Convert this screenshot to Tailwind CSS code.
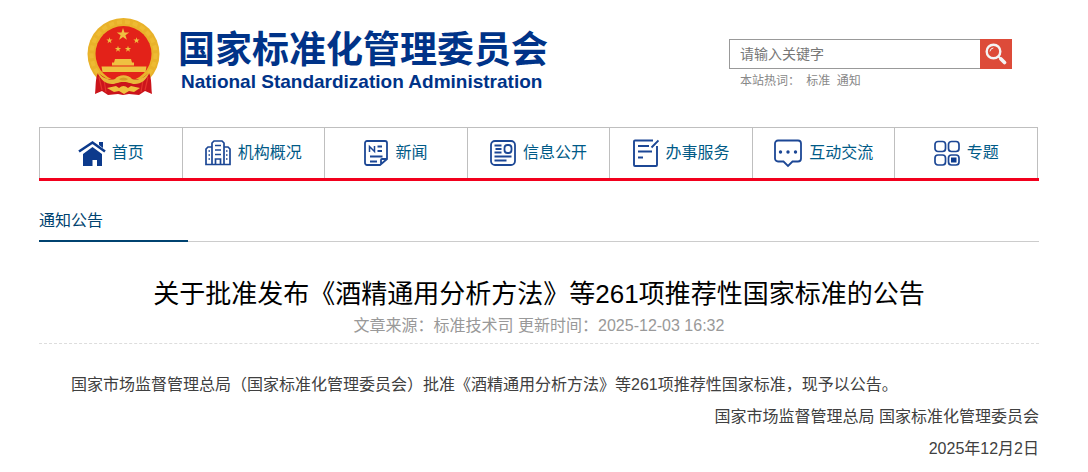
<!DOCTYPE html>
<html lang="zh-CN">
<head>
    <meta charset="UTF-8">
    <meta name="viewport" content="width=device-width, initial-scale=1.0">
    <title>国家标准化管理委员会</title>
    <script src="https://cdn.jsdelivr.net/npm/@tailwindcss/browser@4"></script>
    <style>
        body {
            font-family: 'Liberation Sans', 'Noto Sans CJK SC', sans-serif;
        }
    </style>
</head>
<body class="bg-white pr-[10px]">
    <div class="max-w-[1000px] mx-auto">
        <!-- Header -->
        <header class="flex justify-between pt-[17px] pl-12 pr-[27px] h-[127px]">
            <a href="#" class="flex items-start text-[#003388]">
                <svg class="w-[74px] h-[79px] shrink-0" viewBox="0 0 74 79">
                    <circle cx="36.500" cy="37" r="36" fill="#e9b22a"/>
                    <circle cx="36.500" cy="37" r="32" fill="none" stroke="#eebb33" stroke-width="4" stroke-dasharray="5 3"/>
                    <circle cx="36.500" cy="37" r="28" fill="#e32219"/>
                    <path d="M11 56C8 62 9 70 8 77l7-3 6 4 10-1 5 1 6-1 10 1 6-4 7 3c-1-7 0-15-3-21l-8 6-10 0-7 3-7-3-10 0z" fill="#cb141b"/>
                    <path d="M12 60l3 13M17 63l2 12M61 60l-3 13M56 63l-2 12" stroke="#e5332b" stroke-width="1.200"/>
                    <g fill="#efc141">
                        <path d="M0-6.500L1.500-2H6.200L2.400.8 3.900 5.300 0 2.500-3.900 5.300-2.400.8-6.200-2H-1.500z" transform="translate(36 17.500)"/>
                        <path d="M0-6.500L1.500-2H6.200L2.400.8 3.900 5.300 0 2.500-3.900 5.300-2.400.8-6.200-2H-1.500z" transform="translate(22.500 23.500) scale(.5)"/>
                        <path d="M0-6.500L1.500-2H6.200L2.400.8 3.900 5.300 0 2.500-3.900 5.300-2.400.8-6.200-2H-1.500z" transform="translate(49.500 23.500) scale(.5)"/>
                        <path d="M0-6.500L1.500-2H6.200L2.400.8 3.900 5.300 0 2.500-3.900 5.300-2.400.8-6.200-2H-1.500z" transform="translate(31 32) scale(.5)"/>
                        <path d="M0-6.500L1.500-2H6.200L2.400.8 3.900 5.300 0 2.500-3.900 5.300-2.400.8-6.200-2H-1.500z" transform="translate(41 32) scale(.5)"/>
                        <path d="M28 42h16l1 3.500H27zM25 45.500h22v3H25zM14.500 49.500h45l-1 5.500h-43z"/>
                    </g>
                    <path d="M10 54c5 7 12 10 18 8 4-5 13-5 17 0 6 2 13-1 18-8-3 9-9 13-15 13-4 0-6-2-11.500-2S29 67 25 67c-6 0-12-4-15-13z" fill="#e9b93a"/>
                    <path d="M20 71l9-2 3 2q4.500-4 9 0l3-2 9 2-6 4-5-1-5 3-5-3-5 1z" fill="#efc141"/>
                    <path d="M32 62c3-2 6-2 9 0-2 2-7 2-9 0z" fill="#d69a24"/>
                </svg>
                <span class="flex flex-col pt-[13px] pl-[17px]">
                    <span class="text-[37px] leading-[42px] font-bold whitespace-nowrap">国家标准化管理委员会</span>
                    <span class="text-[19px] leading-5 font-bold pl-[3px] whitespace-nowrap">National Standardization Administration</span>
                </span>
            </a>
            <div class="w-[283px] pt-[22px] text-[#888]">
                <form class="flex">
                    <input type="text" aria-label="关键字" placeholder="请输入关键字" class="flex-1 min-w-0 h-[30px] border border-r-0 border-[#999] px-[10px] text-sm placeholder:text-[#777] focus:outline-none">
                    <button type="submit" aria-label="搜索" class="w-8 h-[30px] bg-[#dd4b39] flex items-center justify-center">
                        <svg class="w-[22px] h-[22px]" viewBox="0 0 22 22" fill="none" stroke="#f4f4f4" stroke-linecap="round">
                            <circle cx="8.500" cy="8.500" r="6.800" stroke-width="2.400"/>
                            <path d="M5 8a3.500 3.500 0 0 1 3-3" stroke-width="1"/>
                            <path d="M14 14l2 2" stroke-width="2"/>
                            <path d="M16 16l3.500 3.500" stroke-width="3.600"/>
                        </svg>
                    </button>
                </form>
                <p class="pl-[11px] pt-[2px] text-xs leading-5">本站热词： <a href="#" class="mx-[3px]">标准</a> <a href="#">通知</a></p>
            </div>
        </header>

        <!-- Navigation -->
        <nav class="border-b-[3px] border-[#f2001d]">
            <ul class="mr-px grid grid-cols-7 border-t border-l border-[#bfbfbf] text-[#005a87]">
                <li class="border-r border-[#bfbfbf]">
                    <a href="#" class="flex h-[50px] items-center justify-center gap-[6px]">
                        <svg class="w-7 h-7" viewBox="0 0 28 28" fill="#0c3a8c">
                            <path d="M1 12.500L14.500 3.500 27 12.500" fill="none" stroke="#0c3a8c" stroke-width="2.600"/>
                            <path d="M21 3h4v6l-4-3zM14.500 8L24 15v12h-5v-6h-4.500v6H5V15z"/>
                        </svg>
                        首页
                    </a>
                </li>
                <li class="border-r border-[#bfbfbf]">
                    <a href="#" class="flex h-[50px] items-center justify-center gap-[7px]">
                        <svg class="w-[26px] h-7" viewBox="0 0 26 28" fill="none" stroke="#1c4795" stroke-width="1.700">
                            <path d="M7 25.500V4l2-2h8l2 2v21.500M7 8H3L1 10v15.500h24V10l-2-2h-4M10.500 25v-5h5v5"/>
                            <path d="M10 6.500h6M10 11h6M10 15.500h6M3.500 12h1.500M3.500 16h1.500M3.500 20h1.500M21 12h1.500M21 16h1.500M21 20h1.500"/>
                        </svg>
                        机构概况
                    </a>
                </li>
                <li class="border-r border-[#bfbfbf]">
                    <a href="#" class="flex h-[50px] items-center justify-center gap-[7px]">
                        <svg class="w-6 h-7" viewBox="0 0 24 28" fill="none" stroke="#1c4795" stroke-width="1.800">
                            <path d="M16 26H3a2 2 0 0 1-2-2V4a2 2 0 0 1 2-2h18a2 2 0 0 1 2 2v16zM17 25v-4q0-1 1-1h4.500"/>
                            <path d="M5.500 13V7.500L10.500 12.500V7" stroke-width="1.500"/>
                            <path d="M13.500 7.500h4.500M13.500 12h4.500M6 17.500h12.500M6 22.500h7"/>
                        </svg>
                        新闻
                    </a>
                </li>
                <li class="border-r border-[#bfbfbf]">
                    <a href="#" class="flex h-[50px] items-center justify-center gap-[7px]">
                        <svg class="w-[26px] h-7" viewBox="0 0 26 28" fill="none" stroke="#1c4795" stroke-width="1.800">
                            <rect x="1" y="2" width="24" height="24" rx="4"/>
                            <rect x="14.500" y="6" width="7" height="8" rx="3"/>
                            <path d="M4.500 6.500h7M5.500 10h6M4.500 13.500h7M4.500 17.500h17M4.500 21.500h12"/>
                        </svg>
                        信息公开
                    </a>
                </li>
                <li class="border-r border-[#bfbfbf]">
                    <a href="#" class="flex h-[50px] items-center justify-center gap-[7px]">
                        <svg class="w-[26px] h-[30px]" viewBox="0 0 26 30" fill="none" stroke="#1c4795" stroke-width="1.900">
                            <path d="M20 2.500H2a1 1 0 0 0-1 1V27a1 1 0 0 0 1 1h21a1 1 0 0 0 1-1V8M25.500 2.500L18.500 9.500"/>
                            <path d="M5 8h11M5 13.500h14M5 19.500h5"/>
                        </svg>
                        办事服务
                    </a>
                </li>
                <li class="border-r border-[#bfbfbf]">
                    <a href="#" class="flex h-[50px] items-center justify-center gap-[7px]">
                        <svg class="w-7 h-[30px]" viewBox="0 0 28 30" fill="none" stroke="#1c4795" stroke-width="1.800">
                            <path d="M4 2.500h20a3 3 0 0 1 3 3v15a3 3 0 0 1-3 3h-5.500L14 28l-4.500-4.500H4a3 3 0 0 1-3-3v-15a3 3 0 0 1 3-3z"/>
                            <path d="M6.500 14h.01M14 14h.01M21.500 14h.01" stroke-width="3.400" stroke-linecap="round"/>
                        </svg>
                        互动交流
                    </a>
                </li>
                <li class="border-r border-[#bfbfbf]">
                    <a href="#" class="flex h-[50px] items-center justify-center gap-[7px]">
                        <svg class="w-[26px] h-7" viewBox="0 0 26 28" fill="none" stroke="#1c4795" stroke-width="1.700">
                            <rect x="1" y="2.500" width="10.500" height="10" rx="3"/>
                            <rect x="14.500" y="2.500" width="10.500" height="10" rx="3"/>
                            <rect x="1" y="16" width="10.500" height="10" rx="3"/>
                            <rect x="14.500" y="16" width="10.500" height="10" rx="3"/>
                            <path d="M17 18.500h5.500v5H17z" fill="#0c3a8c" stroke="none"/>
                        </svg>
                        专题
                    </a>
                </li>
            </ul>
        </nav>

        <!-- Section heading -->
        <div class="mt-6 flex items-end">
            <h2 class="w-[149px] h-[37px] leading-8 border-b-2 border-[#004370] text-[#004370]">通知公告</h2>
            <div class="flex-1 border-b border-[#ccc]"></div>
        </div>

        <!-- Article -->
        <article class="pt-8">
            <h1 class="text-[26px] leading-10 text-center text-black">关于批准发布《酒精通用分析方法》等261项推荐性国家标准的公告</h1>
            <p class="h-[30px] leading-6 text-center text-[#999] border-b border-dashed border-[#ddd]">文章来源：标准技术司 更新时间：2025-12-03 16:32</p>
            <div class="pt-[25px] leading-8 text-[#404040]">
                <p class="indent-[2em]">国家市场监督管理总局（国家标准化管理委员会）批准《酒精通用分析方法》等261项推荐性国家标准，现予以公告。</p>
                <p class="text-right">国家市场监督管理总局 国家标准化管理委员会</p>
                <p class="text-right">2025年12月2日</p>
            </div>
        </article>
    </div>
</body>
</html>
